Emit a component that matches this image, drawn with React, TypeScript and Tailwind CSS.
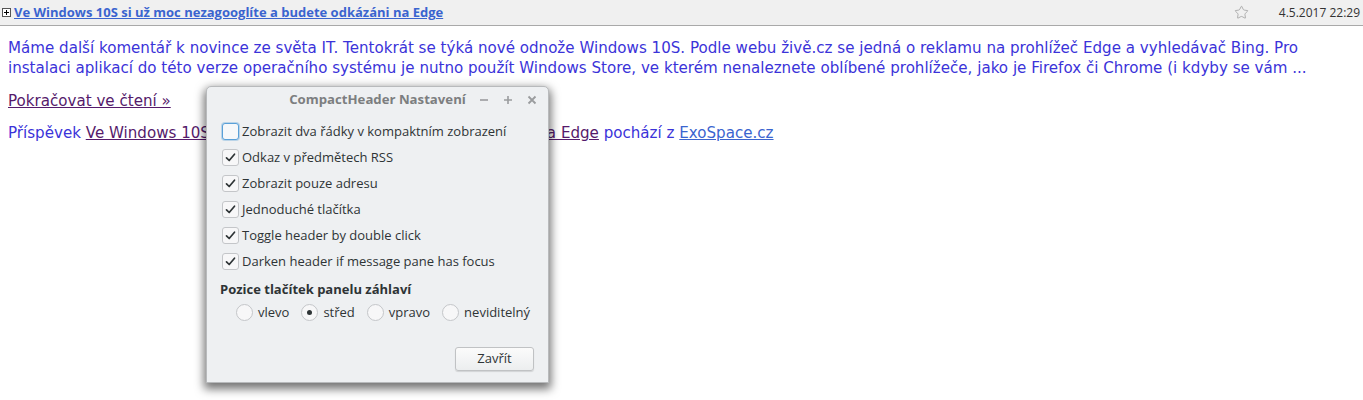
import { Star } from "lucide-react";

function Check({ checked, focus }: { checked?: boolean; focus?: boolean }) {
    return (
        <span
            className={`w-[17px] h-[17px] rounded-[3px] border flex items-center justify-center shrink-0 ${focus
                ? "border-[#5aa0d8] bg-[#f6f8fa] shadow-[0_0_0_1px_rgba(90,160,216,0.35)]"
                : "border-[#c4c6c9] bg-[#f7f7f8]"
                }`}
        >
            {checked && (
                <svg width="11" height="11" viewBox="0 0 11 11">
                    <path d="M1.5 5.8 L4.2 8.5 L9.5 2.2" fill="none" stroke="#2e3436" strokeWidth="1.7" strokeLinecap="round" strokeLinejoin="round" />
                </svg>
            )}
        </span>
    );
}

function Radio({ checked }: { checked?: boolean }) {
    return (
        <span className="w-[17px] h-[17px] rounded-full border border-[#c4c6c9] bg-[#f7f7f8] flex items-center justify-center shrink-0">
            {checked && <span className="w-[5px] h-[5px] rounded-full bg-[#2e3436]" />}
        </span>
    );
}

const options = [
    { label: "Zobrazit dva řádky v kompaktním zobrazení", checked: false, focus: true },
    { label: "Odkaz v předmětech RSS", checked: true },
    { label: "Zobrazit pouze adresu", checked: true },
    { label: "Jednoduché tlačítka", checked: true },
    { label: "Toggle header by double click", checked: true },
    { label: "Darken header if message pane has focus", checked: true },
];

const positions = [
    { label: "vlevo", checked: false },
    { label: "střed", checked: true },
    { label: "vpravo", checked: false },
    { label: "neviditelný", checked: false },
];

export default function App() {
    return (
        <div className="relative w-[1363px] h-[400px] bg-white overflow-hidden">
            {/* message header */}
            <div className="h-[26px] flex items-center bg-[#f0f0f0] border-b border-[#a9a9a9] font-['Open_Sans',sans-serif] text-[13px]">
                <span className="ml-[2px] w-[9px] h-[9px] border border-[#555] bg-white flex items-center justify-center">
                    <svg width="7" height="7" viewBox="0 0 7 7">
                        <path d="M3.5 1v5M1 3.5h5" stroke="#000" strokeWidth="1" />
                    </svg>
                </span>
                <a className="ml-[3px] font-bold text-[#3a64cf] underline">
                    Ve Windows 10S si už moc nezagooglíte a budete odkázáni na Edge
                </a>
                <div className="flex-1" />
                <Star size={15} strokeWidth={1.2} className="text-[#9a9a9a] mr-[30px]" />
                <span className="text-[#333] text-[12px] mr-[3px]">4.5.2017 22:29</span>
            </div>

            {/* message body */}
            <div className="px-2 pt-[12px] font-['DejaVu_Sans',sans-serif] text-[15.1px] leading-[20px] text-[#3b33d9]">
                <p className="whitespace-nowrap">
                    Máme další komentář k novince ze světa IT. Tentokrát se týká nové odnože Windows 10S. Podle webu živě.cz se jedná o reklamu na prohlížeč Edge a vyhledávač Bing. Pro
                    <br />
                    instalaci aplikací do této verze operačního systému je nutno použít Windows Store, ve kterém nenaleznete oblíbené prohlížeče, jako je Firefox či Chrome (i kdyby se vám ...
                </p>
                <p className="mt-[13px]">
                    <a className="text-[#551a6b] underline">Pokračovat ve čtení »</a>
                </p>
                <p className="mt-[12px]">
                    Příspěvek <a className="text-[#551a6b] underline">Ve Windows 10S si už moc nezagooglíte a budete odkázáni na Edge</a> pochází z{" "}
                    <a className="text-[#3a64cf] underline">ExoSpace.cz</a>
                </p>
            </div>

            {/* settings dialog */}
            <div className="absolute left-[206px] top-[86px] w-[343px] h-[297px] bg-[#eef0f2] rounded-t-[5px] border border-[#b8babc] shadow-[0_4px_10px_2px_rgba(0,0,0,0.55)] font-['Open_Sans',sans-serif] text-[13px] text-[#2e3436]">
                <div className="h-[26px] flex items-center relative">
                    <div className="absolute inset-0 flex items-center justify-center">
                        <span className="font-bold text-[13.2px] text-[#7c7e80]">CompactHeader Nastavení</span>
                    </div>
                    <div className="ml-auto mr-[10px] flex items-center gap-[12px] text-[#9a9c9e] relative">
                        <svg width="12" height="12" viewBox="0 0 12 12"><path d="M2 6h8" stroke="currentColor" strokeWidth="1.6" /></svg>
                        <svg width="12" height="12" viewBox="0 0 12 12"><path d="M2 6h8M6 2v8" stroke="currentColor" strokeWidth="1.6" /></svg>
                        <svg width="12" height="12" viewBox="0 0 12 12"><path d="M2.5 2.5l7 7M9.5 2.5l-7 7" stroke="currentColor" strokeWidth="1.8" /></svg>
                    </div>
                </div>

                <div className="pl-[15px] pt-[10px] flex flex-col gap-[9px]">
                    {options.map((o) => (
                        <label key={o.label} className="flex items-center gap-[3px] h-[17px]">
                            <Check checked={o.checked} focus={o.focus} />
                            <span>{o.label}</span>
                        </label>
                    ))}
                </div>

                <div className="pl-[13px] mt-[10px] font-bold">Pozice tlačítek panelu záhlaví</div>

                <div className="pl-[29px] mt-[3px] flex items-center gap-[12px]">
                    {positions.map((p) => (
                        <label key={p.label} className="flex items-center gap-[5px]">
                            <Radio checked={p.checked} />
                            <span>{p.label}</span>
                        </label>
                    ))}
                </div>

                <div className="flex justify-end pr-[14px] mt-[25px]">
                    <button className="w-[79px] h-[24px] rounded-[3px] border border-[#c0c2c4] bg-gradient-to-b from-[#fbfbfb] to-[#eceeef] shadow-[0_1px_1px_rgba(0,0,0,0.12)] text-[#2e3436]">
                        Zavřít
                    </button>
                </div>
            </div>
        </div>
    );
}
